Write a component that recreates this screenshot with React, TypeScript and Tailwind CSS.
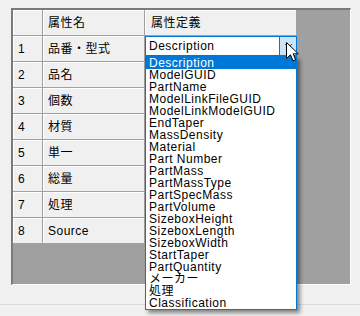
import React from 'react';

const ROWS = ['品番・型式', '品名', '個数', '材質', '単一', '総量', '処理', 'Source'];

const OPTIONS = [
  'Description',
  'ModelGUID',
  'PartName',
  'ModelLinkFileGUID',
  'ModelLinkModelGUID',
  'EndTaper',
  'MassDensity',
  'Material',
  'Part Number',
  'PartMass',
  'PartMassType',
  'PartSpecMass',
  'PartVolume',
  'SizeboxHeight',
  'SizeboxLength',
  'SizeboxWidth',
  'StartTaper',
  'PartQuantity',
  'メーカー',
  '処理',
  'Classification',
];

const font = "font-['Liberation_Sans','Noto_Sans_CJK_JP',sans-serif] tracking-[0.5px]";
const cell = 'flex items-center border-r border-b border-[#a0a0a0] shadow-[inset_1px_1px_0_#ffffff] bg-[#f0f0f0] text-[12px] text-black';

const App: React.FC = () => {
  return (
    <div className={`relative w-[360px] h-[316px] overflow-hidden bg-[#f0f0f0] ${font}`}>
      <div className="pt-2 pl-[11px]">
        {/* grid frame */}
        <div className="w-[340px] h-[277px] border-t-2 border-l-2 border-t-[#7a7a7a] border-l-[#7a7a7a] border-r border-b border-r-white border-b-white bg-[#a0a0a0]">
          <div className="flex h-[26px]">
            <div className={`${cell} w-[30px]`} />
            <div className={`${cell} w-[102px] pl-[5px]`}>属性名</div>
            <div className={`${cell} w-[152px] pl-[6px]`}>属性定義</div>
          </div>
          {ROWS.map((name, i) => (
            <div key={i} className="flex h-[26px]">
              <div className={`${cell} w-[30px] pl-[5px]`}>{i + 1}</div>
              <div className={`${cell} w-[102px] pl-[5px]`}>{name}</div>
              <div className={`${cell} w-[152px]`} />
            </div>
          ))}
        </div>
      </div>
      <div className="mt-[19px] border-t border-[#dadada]" />

      {/* combo box */}
      <div className="absolute left-[145px] top-[36px] w-[152px] h-[20px] bg-white border border-[#0078d7] flex">
        <div className="flex-1 flex items-center pl-[3px] text-[12px] text-black">Description</div>
        <div className="w-[17px] h-full bg-[#cce4f7] border-l border-[#0078d7] flex items-center justify-center">
          <svg width="9" height="6" viewBox="0 0 9 6">
            <path d="M1 1 L4.5 4.5 L8 1" fill="none" stroke="#404040" strokeWidth="1" />
          </svg>
        </div>
      </div>

      {/* dropdown list */}
      <div className="absolute left-[145px] top-[56px] w-[152px] h-[254px] bg-white border border-[#0078d7] shadow-[3px_3px_4px_rgba(0,0,0,0.45)]">
        {OPTIONS.map((o, i) => (
          <div
            key={o}
            className={`h-[12px] leading-[12px] pl-[3px] text-[12px] whitespace-nowrap ${
              i === 0 ? 'bg-[#0078d7] text-white' : 'text-black'
            }`}
          >
            {o}
          </div>
        ))}
      </div>

      {/* mouse cursor */}
      <svg className="absolute left-[286px] top-[42px]" width="14" height="21" viewBox="0 0 14 21">
        <path
          d="M0.5 0.5 L0.5 16.5 L4.5 12.8 L7 18.8 L9.6 17.7 L7.2 11.8 L12.3 11.8 Z"
          fill="#ffffff"
          stroke="#000000"
          strokeWidth="1"
          strokeLinejoin="miter"
        />
      </svg>
    </div>
  );
};

export default App;
